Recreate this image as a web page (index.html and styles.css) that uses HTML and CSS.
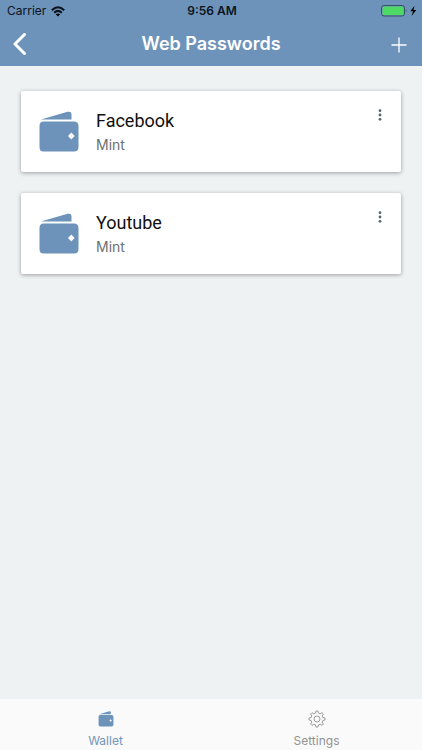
FILE: index.html
```html
<!DOCTYPE html>
<html lang="en">
<head>
<meta charset="utf-8">
<meta name="viewport" content="width=device-width, initial-scale=1">
<title>Web Passwords</title>
<link rel="stylesheet" href="styles.css">
</head>
<body>
<svg class="defs" aria-hidden="true">
  <symbol id="wallet" viewBox="0 0 40 42">
    <path d="M2 8.500 28.500 .8Q32.500 0 32.500 3V8.500Z"/>
    <path fill-rule="evenodd" d="M4.500 10.500H35Q39.500 10.500 39.500 15V36Q39.500 40.500 35 40.500H4.500Q.5 40.500 .5 36V15Q.5 10.500 4.500 10.500ZM32.300 21.500 35.600 25 32.300 28.500 29 25Z"/>
  </symbol>
</svg>
<header class="header">
  <div class="status">
    <div class="status-left">
      <span>Carrier</span>
      <svg class="wifi" viewBox="0 0 14 11" aria-hidden="true">
        <path class="arc" d="M.8 4.200Q7-1.800 13.200 4.200M3.200 6.700Q7 3 10.800 6.700"/>
        <path d="M4.800 8.300Q7 6.500 9.200 8.300L7 10.600Z"/>
      </svg>
    </div>
    <time class="clock">9:56 AM</time>
    <div class="status-right">
      <svg class="battery" viewBox="0 0 36 12" aria-hidden="true">
        <rect class="case" x=".5" y=".5" width="23" height="10.500" rx="2.500"/>
        <rect class="charge" x="1.500" y="1.500" width="21" height="8.500" rx="1.500"/>
        <path class="nub" d="M24.800 4Q26.500 5.700 24.800 7.500Z"/>
        <path d="M33.500 .8 29.300 6.300H32L30.600 11 35.300 4.900H32.500Z"/>
      </svg>
    </div>
  </div>
  <div class="bar">
    <button class="bar-button" type="button" aria-label="Back">
      <svg class="back" viewBox="0 0 14 22"><path d="M11.500 1.500 2 11 11.500 20.500"/></svg>
    </button>
    <h1 class="title">Web Passwords</h1>
    <button class="bar-button end" type="button" aria-label="Add">
      <svg class="plus" viewBox="0 0 16 16"><path d="M8 .5V15.500M.5 8H15.500"/></svg>
    </button>
  </div>
</header>
<main class="list">
  <article class="card">
    <svg class="card-icon" aria-hidden="true"><use href="#wallet"/></svg>
    <div class="card-text">
      <h2 class="name">Facebook</h2>
      <p class="account">Mint</p>
    </div>
    <button class="more" type="button" aria-label="Facebook options">
      <svg class="dots" viewBox="0 0 4 12"><circle cx="2" cy="1.700" r="1.400"/><circle cx="2" cy="6" r="1.400"/><circle cx="2" cy="10.300" r="1.400"/></svg>
    </button>
  </article>
  <article class="card">
    <svg class="card-icon" aria-hidden="true"><use href="#wallet"/></svg>
    <div class="card-text">
      <h2 class="name">Youtube</h2>
      <p class="account">Mint</p>
    </div>
    <button class="more" type="button" aria-label="Youtube options">
      <svg class="dots" viewBox="0 0 4 12"><circle cx="2" cy="1.700" r="1.400"/><circle cx="2" cy="6" r="1.400"/><circle cx="2" cy="10.300" r="1.400"/></svg>
    </button>
  </article>
</main>
<nav class="tabs">
  <a class="tab active" href="#wallet-tab">
    <svg class="tab-icon wallet-small" aria-hidden="true"><use href="#wallet"/></svg>
    <span>Wallet</span>
  </a>
  <a class="tab" href="#settings-tab">
    <svg class="tab-icon gear" viewBox="-12 -12 24 24" aria-hidden="true">
      <path d="M-2-7.800-1.300-10.700H1.300L2-7.800 4.100-6.900 6.700-8.500 8.500-6.700 6.900-4.100 7.800-2 10.700-1.300V1.300L7.800 2 6.900 4.100 8.500 6.700 6.700 8.500 4.100 6.900 2 7.800 1.300 10.700H-1.300L-2 7.800-4.100 6.900-6.700 8.500-8.500 6.700-6.900 4.100-7.800 2-10.700 1.300V-1.300L-7.800-2-6.900-4.100-8.500-6.700-6.700-8.500-4.100-6.900Z"/>
      <circle r="4"/>
    </svg>
    <span>Settings</span>
  </a>
</nav>
</body>
</html>
```
FILE: styles.css
```css
* {
  box-sizing: border-box;
}

body {
  margin: 0;
  min-height: 100vh;
  display: flex;
  flex-direction: column;
  background: #eef2f2;
  font-family: Inter, "Liberation Sans", sans-serif;
}

button {
  border: 0;
  padding: 0;
  background: none;
  color: inherit;
  font: inherit;
}

svg {
  display: block;
}

.defs {
  position: absolute;
  width: 0;
  height: 0;
}

.header {
  background: #6d93bb;
  color: #fff;
}

.status {
  display: grid;
  grid-template-columns: 1fr auto 1fr;
  align-items: center;
  height: 22px;
  padding: 0 5px 0 7px;
  color: #0c131b;
  font-size: 12px;
  line-height: 22px;
}

.status-left {
  display: flex;
  align-items: center;
  gap: 5px;
}

.wifi {
  width: 14px;
  height: 11px;
}

.arc {
  fill: none;
  stroke: #0c131b;
  stroke-width: 2;
}

.clock {
  font-weight: 600;
}

.status-right {
  display: flex;
  justify-content: flex-end;
}

.battery {
  width: 36px;
  height: 12px;
}

.case {
  fill: none;
  stroke: #38506a;
}

.charge {
  fill: #4cd964;
}

.nub {
  fill: #38506a;
}

.bar {
  display: grid;
  grid-template-columns: 44px 1fr 44px;
  align-items: center;
  height: 44px;
  padding: 0 13px;
}

.bar-button {
  height: 44px;
}

.end {
  padding: 2px 0 0 26px;
}

.back {
  width: 14px;
  height: 22px;
  fill: none;
  stroke: #fff;
  stroke-width: 3;
  stroke-linecap: round;
  stroke-linejoin: round;
}

.plus {
  width: 16px;
  height: 16px;
  fill: none;
  stroke: #fff;
  stroke-width: 1.300;
}

.title {
  margin: 0;
  font-size: 18px;
  font-weight: 600;
  line-height: 42px;
  text-align: center;
}

.list {
  flex: 1;
  display: flex;
  flex-direction: column;
  gap: 21px;
  padding: 25px 21px;
}

.card {
  display: flex;
  align-items: flex-start;
  height: 81px;
  padding: 18px 18px 0;
  border-radius: 2px;
  background: #fff;
  box-shadow: 0 1px 4px rgba(0, 0, 0, 0.35);
}

.card-icon {
  width: 40px;
  height: 42px;
  margin-top: 2px;
  fill: #6d93bb;
}

.card-text {
  flex: 1;
  padding-left: 17px;
}

.name {
  margin: 0;
  color: #111;
  font-family: Roboto, "Liberation Sans", sans-serif;
  font-size: 18px;
  font-weight: 400;
  line-height: 23px;
}

.account {
  margin: 2px 0 0;
  color: #6d7071;
  font-size: 14px;
  line-height: 22px;
}

.dots {
  width: 6px;
  height: 12px;
  fill: #596571;
}

.tabs {
  display: flex;
  height: 51px;
  background: #fafafa;
}

.tab {
  flex: 1;
  display: flex;
  flex-direction: column;
  align-items: center;
  padding-top: 11px;
  color: #929292;
  font-size: 12px;
  line-height: 18px;
  text-decoration: none;
}

.active {
  color: #7396bb;
}

.tab-icon {
  width: 18px;
  height: 18px;
  margin-bottom: 4px;
}

.wallet-small {
  height: 16px;
  margin: 1px 0 5px;
  fill: #6d93bb;
}

.gear {
  fill: none;
  stroke: #929292;
  stroke-width: 1.200;
  stroke-linejoin: round;
}
```
